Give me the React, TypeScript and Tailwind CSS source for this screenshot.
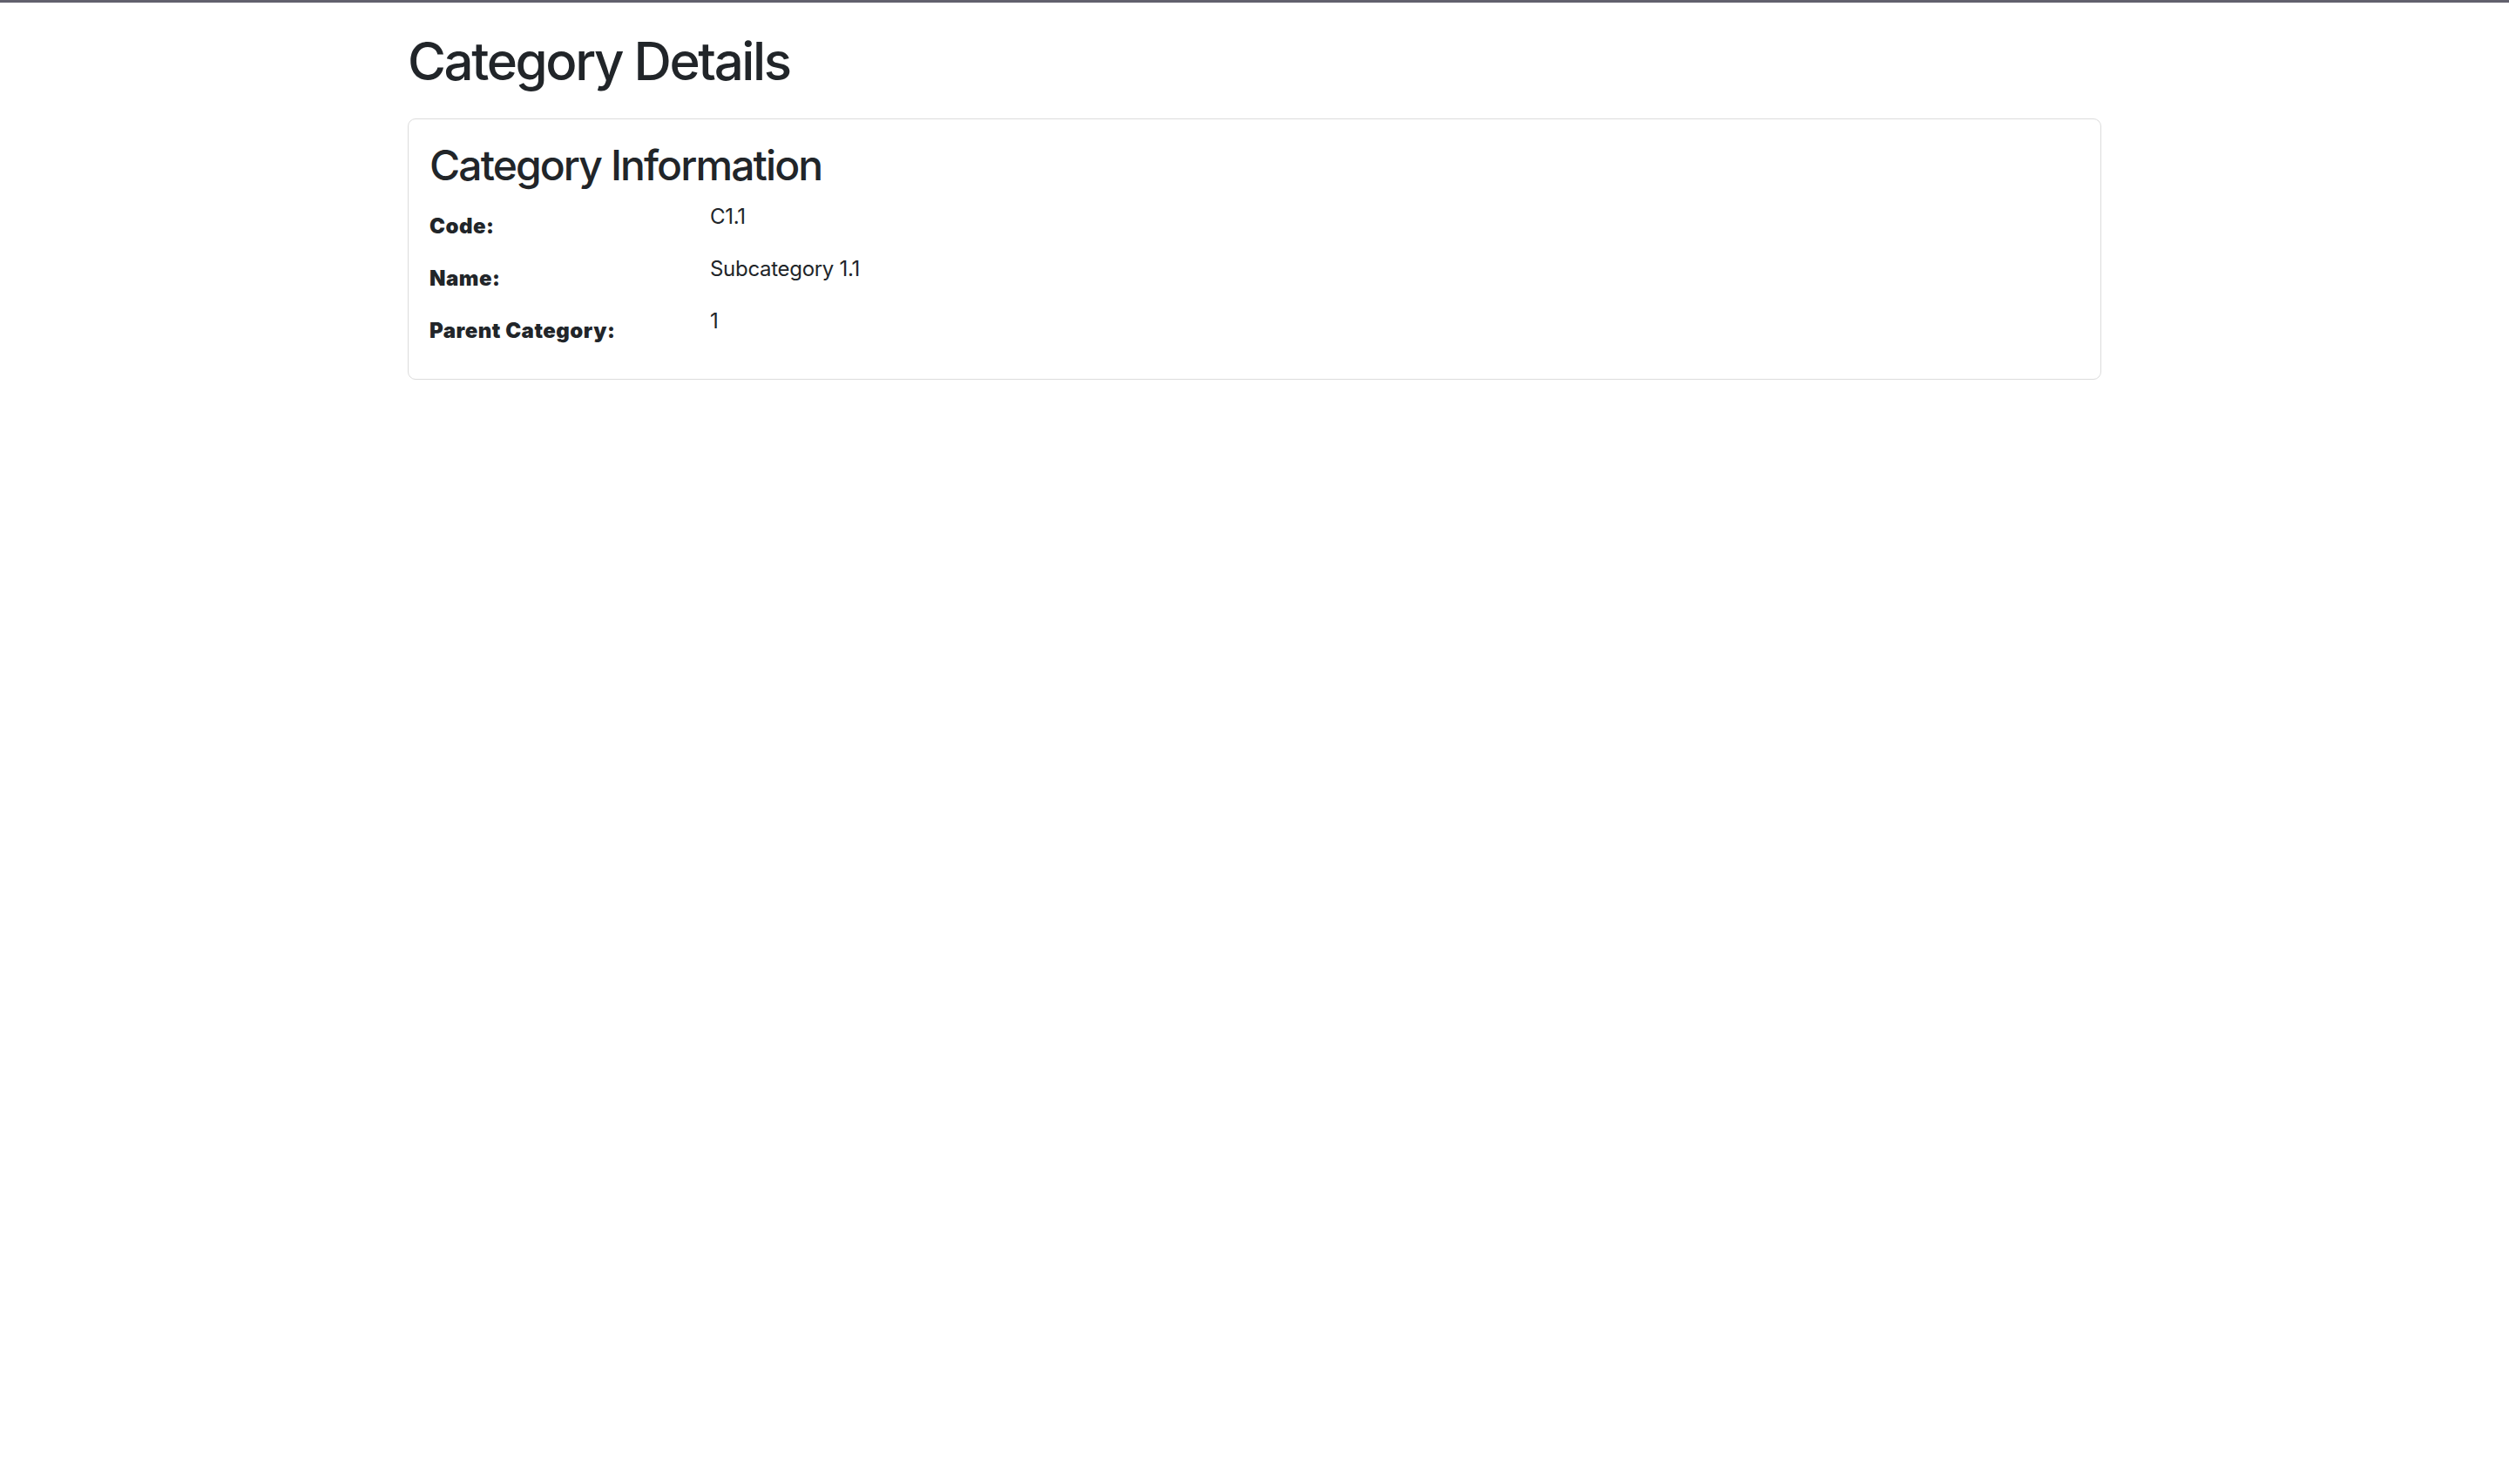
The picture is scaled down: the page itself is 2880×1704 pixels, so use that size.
import React from "react";

const rows = [
  { label: "Code:", value: "C1.1" },
  { label: "Name:", value: "Subcategory 1.1" },
  { label: "Parent Category:", value: "1" },
];

export default function App() {
  return (
    <div className="min-h-screen bg-white text-[#212529] font-['Inter','Noto_Sans',sans-serif]">
      <div className="h-[3px] bg-[#62616d]" />
      <div className="mx-auto w-[1944px] pt-[31px]">
        <h1 className="text-[60px] leading-[72px] font-medium tracking-[-2.4px] mb-[30px]">
          Category Details
        </h1>
        <div className="border border-[#dcdcdc] rounded-[9px] p-[24px]">
          <h2 className="text-[48px] leading-[57.6px] font-medium tracking-[-1.9px] mb-[12px]">
            Category Information
          </h2>
          <div className="flex flex-col gap-[24px] mb-[24px]">
            {rows.map((r) => (
              <div key={r.label} className="flex h-[36px]">
                <div className="w-[322px] text-[24px] leading-[36px] font-black tracking-[0.5px] pt-[11px]">
                  {r.label}
                </div>
                <div className="text-[24px] leading-[36px] font-normal tracking-[-0.3px]">{r.value}</div>
              </div>
            ))}
          </div>
        </div>
      </div>
    </div>
  );
}
